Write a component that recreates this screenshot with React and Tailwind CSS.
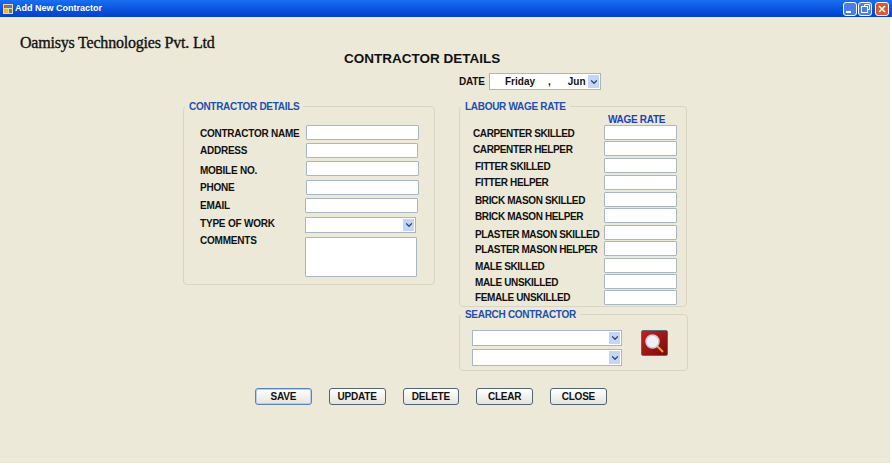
import { ChevronDown } from 'lucide-react';

const leftRows = [
  { label: 'CONTRACTOR NAME', row: 'mt-[12px]', text: 'pt-[2px]', field: 'w-[113px]' },
  { label: 'ADDRESS', row: 'mt-[3px]', text: '', field: 'w-[112px]' },
  { label: 'MOBILE NO.', row: 'mt-[3px]', text: 'pt-[3px]', field: 'w-[113px]' },
  { label: 'PHONE', row: 'mt-[4px]', text: '', field: 'w-[113px]' },
  { label: 'EMAIL', row: 'mt-[3px]', text: '', field: 'w-[113px] ml-[-1px]' },
];

const wageRows = [
  { label: 'CARPENTER SKILLED', row: '', text: 'pl-[13px] pt-[2px]' },
  { label: 'CARPENTER HELPER', row: 'mt-[1px]', text: 'pl-[13px] pt-[1px]' },
  { label: 'FITTER SKILLED', row: 'mt-[2px]', text: 'pl-[15px] pt-[2px]' },
  { label: 'FITTER HELPER', row: 'mt-[2px]', text: 'pl-[15px]' },
  { label: 'BRICK MASON SKILLED', row: 'mt-[2px]', text: 'pl-[15px] pt-[2px]' },
  { label: 'BRICK MASON HELPER', row: 'mt-[1px]', text: 'pl-[15px] pt-[1px]' },
  { label: 'PLASTER MASON SKILLED', row: 'mt-[2px]', text: 'pl-[15px] pt-[3px]' },
  { label: 'PLASTER MASON HELPER', row: 'mt-[1px]', text: 'pl-[15px] pt-[2px]' },
  { label: 'MALE SKILLED', row: 'mt-[2px]', text: 'pl-[15px] pt-[2px]' },
  { label: 'MALE UNSKILLED', row: 'mt-[1px]', text: 'pl-[15px] pt-[1px]' },
  { label: 'FEMALE UNSKILLED', row: 'mt-[1px]', text: 'pl-[15px]' },
];

const buttons = ['SAVE', 'UPDATE', 'DELETE', 'CLEAR', 'CLOSE'];

function Field({ className = '' }) {
  return <div className={`bg-white border border-[#a9b7c2] rounded-[1px] shrink-0 ${className}`} />;
}

function Combo({ className = '' }) {
  return (
    <div className={`flex justify-end bg-white border border-[#a9b7c2] p-px ${className}`}>
      <div className="w-[11px] bg-[#c6d5f4] flex items-center justify-center text-[#2f4a80]">
        <ChevronDown size={10} strokeWidth={3} />
      </div>
    </div>
  );
}

function Group({ title, className = '', children }) {
  return (
    <fieldset className={`border border-[#d8d5c2] rounded-[4px] ${className}`}>
      <legend className="ml-[1px] px-[4px] text-[10px] leading-[13px] font-bold tracking-[-0.3px] text-[#1f4fb0]">
        {title}
      </legend>
      {children}
    </fieldset>
  );
}

function TitleButton({ className = '', children }) {
  return (
    <div className={`w-[14px] h-[14px] rounded-[3px] border border-white flex items-center justify-center ${className}`}>
      {children}
    </div>
  );
}

export default function App() {
  return (
    <div
      className="w-[892px] h-[465px] bg-white flex flex-col overflow-hidden text-[#111]"
      style={{ fontFamily: '"Liberation Sans", Arial, sans-serif' }}
    >
      <div className="h-[17px] shrink-0 flex items-center pl-[3px] pr-[3px] bg-gradient-to-b from-[#1a6ff0] via-[#0a55e2] to-[#0441c4]">
        <svg width="10" height="10" viewBox="0 0 10 10" className="shrink-0">
          <rect width="10" height="10" fill="#e9d8a6" />
          <rect x="1" y="1" width="4" height="3" fill="#d9542b" />
          <rect x="5" y="1" width="4" height="3" fill="#3f7fd6" />
          <rect x="1" y="5" width="4" height="4" fill="#f2b632" />
          <rect x="6" y="5" width="3" height="4" fill="#5d8f4a" />
        </svg>
        <span className="ml-[2px] text-[9px] font-bold text-white">Add New Contractor</span>
        <div className="ml-auto flex items-center gap-[1px]">
          <TitleButton className="bg-[#4a7de8]">
            <span className="w-[5px] h-[2px] bg-white self-end mb-[2px] mr-[3px]" />
          </TitleButton>
          <TitleButton className="bg-[#4a7de8] mr-[2px]">
            <svg width="9" height="9" viewBox="0 0 9 9" fill="none" stroke="#fff">
              <path d="M3.5 2.5V0.5H8.5V5.5H6.5" />
              <rect x="0.5" y="2.5" width="6" height="6" />
            </svg>
          </TitleButton>
          <TitleButton className="bg-[#e0562c]">
            <svg width="8" height="8" viewBox="0 0 8 8">
              <path d="M1 1L7 7M7 1L1 7" stroke="#fff" strokeWidth="1.6" />
            </svg>
          </TitleButton>
        </div>
      </div>

      <div className="h-[446px] w-[890px] shrink-0 bg-[#ece9d8]">
        <div
          className="pl-[20px] pt-[16px] text-[16px] leading-[20px] tracking-[-0.2px] [-webkit-text-stroke:0.35px_#111] text-[#111]"
          style={{ fontFamily: '"Liberation Serif", serif' }}
        >
          Oamisys Technologies Pvt. Ltd
        </div>
        <div className="pl-[344px] mt-[-4px] text-[13.5px] leading-[20px] font-bold">CONTRACTOR DETAILS</div>

        <div className="pl-[459px] mt-[4px] flex items-center h-[17px]">
          <span className="w-[30px] text-[10px] tracking-[-0.2px] font-bold">DATE</span>
          <div className="w-[112px] h-[17px] bg-white border border-[#a9b7c2] flex items-center text-[10px] font-bold p-px">
            <span className="ml-[14px]">Friday</span>
            <span className="ml-[13px]">,</span>
            <span className="ml-[17px]">Jun</span>
            <div className="ml-auto w-[11px] self-stretch bg-[#c6d5f4] flex items-center justify-center text-[#2f4a80]">
              <ChevronDown size={10} strokeWidth={3} />
            </div>
          </div>
        </div>

        <div className="flex mt-[10px] pl-[183px] items-start">
          <Group title="CONTRACTOR DETAILS" className="w-[252px] h-[185px] shrink-0">
            {leftRows.map((r) => (
              <div key={r.label} className={`h-[15px] flex items-center ${r.row}`}>
                <span className={`pl-[16px] w-[122px] shrink-0 text-[10px] font-bold tracking-[-0.25px] whitespace-nowrap ${r.text}`}>{r.label}</span>
                <Field className={`h-[15px] ${r.field}`} />
              </div>
            ))}
            <div className="mt-[4px] h-[16px] flex items-center">
              <span className="pl-[16px] w-[121px] shrink-0 text-[10px] font-bold tracking-[-0.2px] pb-[3px]">TYPE OF WORK</span>
              <Combo className="w-[111px] h-[16px]" />
            </div>
            <div className="mt-[4px] flex items-start">
              <span className="pl-[16px] w-[121px] shrink-0 text-[10px] leading-[11px] font-bold tracking-[-0.2px] mt-[-2px]">COMMENTS</span>
              <Field className="w-[112px] h-[40px]" />
            </div>
          </Group>

          <div className="ml-[24px] w-[229px] shrink-0">
            <Group title="LABOUR WAGE RATE" className="w-[228px] h-[207px]">
              <div className="pl-[148px] h-[12px] text-[10px] leading-[13px] font-bold tracking-[-0.3px] text-[#1f3fb8]">WAGE RATE</div>
              {wageRows.map((r) => (
                <div key={r.label} className={`h-[15px] flex items-center ${r.row}`}>
                  <span className={`w-[144px] shrink-0 text-[10px] font-bold tracking-[-0.38px] whitespace-nowrap ${r.text}`}>{r.label}</span>
                  <Field className="w-[73px] h-[15px]" />
                </div>
              ))}
            </Group>
            <Group title="SEARCH CONTRACTOR" className="w-[229px] h-[63px] mt-[1px]">
              <div className="flex pl-[12px] pt-[9px] items-start">
                <div className="flex flex-col gap-[3px]">
                  <Combo className="w-[150px] h-[16px]" />
                  <Combo className="w-[150px] h-[17px]" />
                </div>
                <div className="ml-[19px] w-[27px] h-[26px] rounded-[2px] border border-[#5b6b7c] bg-gradient-to-br from-[#c2201f] to-[#7d0c0c] flex items-center justify-center">
                  <svg width="21" height="21" viewBox="0 0 21 21">
                    <line x1="12" y1="12" x2="19" y2="19" stroke="#e9a440" strokeWidth="2" />
                    <circle cx="8.5" cy="8.5" r="6.5" fill="#eef0f4" stroke="#c9ccd4" strokeWidth="1.5" />
                  </svg>
                </div>
              </div>
            </Group>
          </div>
        </div>

        <div className="flex mt-[17px] pl-[255px] gap-[17px]">
          {buttons.map((b, i) => (
            <button
              key={b}
              className={`w-[56.75px] h-[17px] rounded-[3px] border bg-gradient-to-b from-white to-[#e6e4da] text-[10px] tracking-[-0.2px] font-bold text-[#111] flex items-center justify-center ${i === 0 ? 'border-[#5b82bd] shadow-[inset_0_0_0_1px_#b8cdec]' : 'border-[#4f6475]'}`}
            >
              {b}
            </button>
          ))}
        </div>
      </div>
    </div>
  );
}
